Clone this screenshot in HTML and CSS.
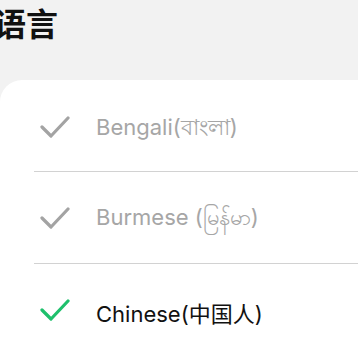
FILE: index.html
```html
<!DOCTYPE html>
<html>
<head>
<meta charset="utf-8">
<link rel="stylesheet" href="styles.css">
</head>
<body>
<div class="page">
  <h1 class="title">语言</h1>
  <div class="card">
    <div class="row">
      <svg class="check" viewBox="0 0 30 24" width="30" height="24"><path d="M2 12 L11 21 L28 3" fill="none" stroke="#a3a3a3" stroke-width="3.2" stroke-linecap="round" stroke-linejoin="round"/></svg>
      <span class="label muted">Bengali(বাংলা)</span>
    </div>
    <div class="row">
      <svg class="check" viewBox="0 0 30 24" width="30" height="24"><path d="M2 12 L11 21 L28 3" fill="none" stroke="#a3a3a3" stroke-width="3.2" stroke-linecap="round" stroke-linejoin="round"/></svg>
      <span class="label muted">Burmese (မြန်မာ)</span>
    </div>
    <div class="row">
      <svg class="check" viewBox="0 0 30 24" width="30" height="24"><path d="M2 12 L11 21 L28 3" fill="none" stroke="#1ec06c" stroke-width="3.2" stroke-linecap="round" stroke-linejoin="round"/></svg>
      <span class="label">Chinese(中国人)</span>
    </div>
  </div>
</div>
</body>
</html>
```
FILE: styles.css
```css
html, body {
  margin: 0;
  padding: 0;
  background: #f2f2f2;
  overflow: hidden;
}
.page {
  width: 358px;
  height: 354px;
  overflow: hidden;
  font-family: Inter, "Noto Sans", "Noto Sans CJK SC", sans-serif;
}
.title {
  margin: 0 0 0 -6px;
  height: 80px;
  padding-top: 2px;
  box-sizing: border-box;
  font-family: "Noto Sans CJK SC", sans-serif;
  font-size: 32px;
  font-weight: 700;
  line-height: 40px;
  color: #111;
}
.card {
  background: #fff;
  border-top-left-radius: 22px;
  margin-right: -30px;
  padding-left: 34px;
  height: 300px;
}
.row {
  height: 91px;
  display: flex;
  align-items: center;
  border-bottom: 1px solid #d2d2d2;
}
.row:first-child {
  padding-top: 2px;
  box-sizing: border-box;
  height: 92px;
}
.row:last-child {
  border-bottom: none;
}
.check {
  margin-left: 6px;
  margin-right: 26px;
  flex: none;
}
.label {
  font-size: 22px;
  color: #111;
  padding-top: 4px;
}
.label.muted {
  color: #a6a6a6;
}
```
